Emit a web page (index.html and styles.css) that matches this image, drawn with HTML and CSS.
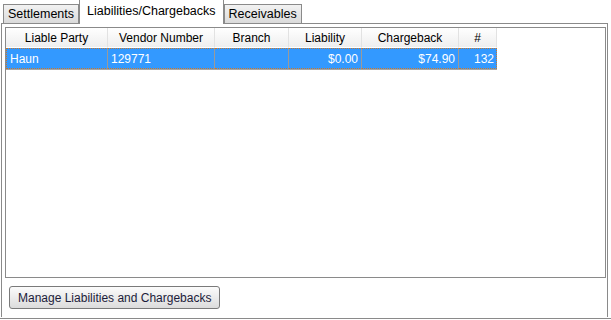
FILE: index.html
```html
<!DOCTYPE html>
<html>
<head>
    <meta charset="utf-8">
    <title>Liabilities/Chargebacks</title>
    <link rel="stylesheet" href="styles.css">
</head>
<body>
    <!-- tab strip -->
    <div class="tabs">
        <div class="tab">Settlements</div>
        <div class="tab active">Liabilities/Chargebacks</div>
        <div class="tab">Receivables</div>
    </div>

    <div class="panel">
        <div class="list">
            <table class="grid">
                <colgroup>
                    <col class="c-party">
                    <col class="c-vendor">
                    <col class="c-branch">
                    <col class="c-liability">
                    <col class="c-chargeback">
                    <col class="c-count">
                </colgroup>
                <thead>
                    <tr>
                        <th>Liable Party</th>
                        <th>Vendor Number</th>
                        <th>Branch</th>
                        <th>Liability</th>
                        <th>Chargeback</th>
                        <th>#</th>
                    </tr>
                </thead>
                <tbody>
                    <tr class="selected">
                        <td>Haun</td>
                        <td>129771</td>
                        <td></td>
                        <td class="num">$0.00</td>
                        <td class="num">$74.90</td>
                        <td class="num">132</td>
                    </tr>
                </tbody>
            </table>
        </div>
        <button class="action" type="button">Manage Liabilities and Chargebacks</button>
    </div>
    <div class="bottom-line"></div>
</body>
</html>
```

FILE: styles.css
```css
body {
    margin: 0;
    background-color: #fff;
    font-family: "Liberation Sans", Arial, sans-serif;
    font-size: 12px;
    color: #000;
}

/* tabs */
.tabs {
    display: flex;
    align-items: flex-end;
    height: 23px;
    padding-left: 3px;
}

.tab {
    display: flex;
    align-items: center;
    height: 18px;
    padding: 0 4px;
    border: 1px solid #8a8a8a;
    border-bottom: none;
    background: linear-gradient(#f2f2f2, #dadada);
    font-size: 12.5px;
    white-space: nowrap;
}

.tab.active {
    position: relative; /* keeps it above the panel border */
    z-index: 1;
    height: 23px;
    margin-bottom: -1px;
    padding: 0 7px 2px 7px;
    background: #fff;
}

/* panel under the tabs */
.panel {
    width: 601px;
    margin-left: 1px;
    padding: 3px 1px 8px 3px;
    border: 1px solid #8a8a8a;
    border-bottom: none;
    background-color: #fff;
}

.list {
    box-sizing: border-box;
    height: 251px;
    border: 1px solid #8a8a8a;
    background-color: #fff;
}

.grid {
    table-layout: fixed;
    width: 491px;
    border-collapse: separate;
    border-spacing: 0;
    border-bottom: 1px solid #a6a6a6;
}

.c-party { width: 102px; }
.c-vendor { width: 107px; }
.c-branch { width: 74px; }
.c-liability { width: 73px; }
.c-chargeback { width: 97px; }
.c-count { width: 38px; }

.grid th {
    height: 19px;
    padding: 0;
    border-right: 1px solid #e2e2e2;
    border-bottom: 1px solid #fff;
    background: linear-gradient(#ffffff, #eeeeee);
    font-weight: normal;
    text-align: center;
    white-space: nowrap;
}

.grid td {
    height: 19px;
    padding: 0 3px;
    border-top: 1px dotted #c8782e;
    border-bottom: 1px dotted #c8782e;
    border-right: 1px solid #9a9a9a;
    white-space: nowrap;
}

.grid td:first-child {
    border-left: 1px dotted #c8782e;
}

.grid td:last-child {
    border-right: 1px dotted #c8782e;
    padding-right: 2px;
}

.selected td {
    background-color: #3399ff;
    color: #fff;
}

.grid td.num {
    text-align: right;
}

/* button */
.action {
    display: block;
    height: 23px;
    margin: 8px 0 0 4px;
    padding: 0 8px;
    border: 1px solid #7a7a7a;
    border-radius: 3px;
    background: linear-gradient(#fbfbfb, #dcdcdc);
    font-family: "Liberation Sans", Arial, sans-serif;
    font-size: 12px;
    color: #1c1c3a;
}

.bottom-line {
    margin-top: 1px;
    border-top: 1px solid #8a8a8a;
}
```
